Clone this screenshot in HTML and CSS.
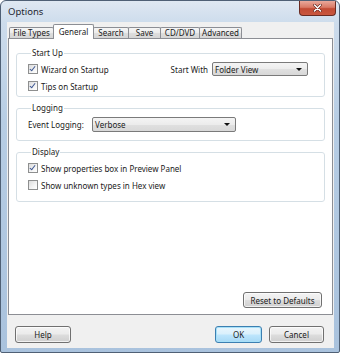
FILE: index.html
```html
<!DOCTYPE html>
<html>
<head>
<meta charset="utf-8">
<link rel="stylesheet" href="styles.css">
</head>
<body>
<div class="window">
  <div class="titlebar">
    <span class="title">Options</span>
    <div class="close">
      <svg width="9" height="8" viewBox="0 0 9 8"><path d="M1.5 1 L7.5 7 M7.5 1 L1.5 7" stroke="#5a1a12" stroke-width="2.6" stroke-linecap="round"/><path d="M1.5 1 L7.5 7 M7.5 1 L1.5 7" stroke="#fff" stroke-width="1.6" stroke-linecap="round"/></svg>
    </div>
  </div>
  <div class="client">
    <div class="tabs">
      <div class="tab w-file">File Types</div>
      <div class="tab active w-general">General</div>
      <div class="tab w-search">Search</div>
      <div class="tab w-save">Save</div>
      <div class="tab w-cd">CD/DVD</div>
      <div class="tab w-adv">Advanced</div>
    </div>
    <div class="panel">
      <fieldset class="group g-start">
        <legend>Start Up</legend>
        <div class="row row-split">
          <label class="check"><span class="box on"></span>Wizard on Startup</label>
          <div class="with">
            <span class="lbl">Start With</span>
            <div class="combo c-folder"><span>Folder View</span><span class="arrow"></span></div>
          </div>
        </div>
        <div class="row">
          <label class="check"><span class="box on"></span>Tips on Startup</label>
        </div>
      </fieldset>
      <fieldset class="group g-log">
        <legend>Logging</legend>
        <div class="row row-log">
          <span class="lbl lbl-log">Event Logging:</span>
          <div class="combo c-verbose"><span>Verbose</span><span class="arrow"></span></div>
        </div>
      </fieldset>
      <fieldset class="group g-disp">
        <legend>Display</legend>
        <div class="row">
          <label class="check"><span class="box on"></span>Show properties box in Preview Panel</label>
        </div>
        <div class="row">
          <label class="check"><span class="box"></span>Show unknown types in Hex view</label>
        </div>
      </fieldset>
      <div class="panel-foot">
        <button class="btn b-reset">Reset to Defaults</button>
      </div>
    </div>
    <div class="footer">
      <button class="btn b-help">Help</button>
      <div class="spacer"></div>
      <button class="btn default b-ok">OK</button>
      <button class="btn b-cancel">Cancel</button>
    </div>
  </div>
</div>
</body>
</html>
```

FILE: styles.css
```css
html, body {
  margin: 0;
  padding: 0;
  background: #ffffff;
}

body {
  font-family: "Noto Sans", "Open Sans", sans-serif;
  font-size: 8px;
  color: #1a1a1a;
}

.window {
  width: 340px;
  height: 353px;
  box-sizing: border-box;
  border: 1px solid #4f6075;
  border-radius: 6px 6px 2px 2px;
  background: linear-gradient(180deg, #dfe8f2 0px, #cddcec 22px, #b7cde4 120px, #a9c2dd 353px);
  display: flex;
  flex-direction: column;
  overflow: hidden;
}

.titlebar {
  height: 21px;
  flex: none;
  display: flex;
  align-items: flex-start;
  padding-left: 7px;
}

.title {
  font-size: 9.5px;
  line-height: 21px;
  color: #1e2630;
}

.close {
  margin-left: auto;
  margin-right: 3px;
  width: 37px;
  height: 15px;
  box-sizing: border-box;
  border: 1px solid #6a2b22;
  border-top: none;
  border-radius: 0 0 4px 4px;
  background: linear-gradient(180deg, #e9a99b 0%, #d97a66 45%, #c24b34 55%, #c9573f 100%);
  display: flex;
  align-items: center;
  justify-content: center;
}

.client {
  flex: 1;
  margin: 0 5px 4px 6px;
  background: #f0f0f0;
  display: flex;
  flex-direction: column;
  padding: 0 1px;
}

.tabs {
  display: flex;
  align-items: flex-end;
  height: 16px;
  padding-left: 1px;
  flex: none;
}

.tab {
  height: 11px;
  box-sizing: border-box;
  border: 1px solid #8c8e94;
  border-bottom: none;
  margin-right: -1px;
  background: linear-gradient(180deg, #f5f5f5 0%, #ebebeb 50%, #dedede 51%, #d6d6d6 100%);
  text-align: center;
  line-height: 10px;
  border-radius: 2px 2px 0 0;
  white-space: nowrap;
  overflow: hidden;
}

.tab.active {
  height: 15px;
  background: #ffffff;
  position: relative;
  z-index: 1;
  margin-bottom: -1px;
  line-height: 13px;
}

.w-file { width: 45px; }
.w-general { width: 41px; }
.w-search { width: 36px; }
.w-save { width: 33px; }
.w-cd { width: 40px; }
.w-adv { width: 43px; }

.panel {
  flex: none;
  height: 277px;
  box-sizing: border-box;
  border: 1px solid #8c8e94;
  background: #ffffff;
  padding: 9px 7px 6px 7px;
  display: flex;
  flex-direction: column;
}

.group {
  margin: 0;
  padding: 0;
  border: 1px solid #d5dfe5;
  border-radius: 3px;
  min-width: 0;
}

.group legend {
  padding: 0 1px;
  margin-left: 3px;
  line-height: 10px;
  height: 10px;
}

.g-start { padding: 4px 16px 3px 11px; }
.g-log { margin-top: 6px; padding: 4px 16px 8px 11px; }
.g-disp { margin-top: 6px; padding: 4px 16px 9px 11px; }

.row {
  display: flex;
  align-items: center;
  height: 14px;
}

.row + .row { margin-top: 3px; }

.row-split { justify-content: space-between; }

.row-log { height: 15px; }

.check {
  display: flex;
  align-items: center;
  white-space: nowrap;
}

.box {
  width: 10px;
  height: 10px;
  box-sizing: border-box;
  border: 1px solid #8e8f8f;
  background: linear-gradient(135deg, #dcdcdc 0%, #f4f4f4 60%, #ffffff 100%);
  margin-right: 3px;
  flex: none;
  position: relative;
}

.box.on::after {
  content: "";
  position: absolute;
  left: 2px;
  top: 0px;
  width: 2px;
  height: 5px;
  border: solid #3b5591;
  border-width: 0 1.6px 1.6px 0;
  transform: rotate(38deg);
  transform-origin: center;
}

.with {
  display: flex;
  align-items: center;
}

.lbl { white-space: nowrap; }

.with .lbl { margin-right: 4px; }

.lbl-log { width: 64px; flex: none; }

.combo {
  height: 14px;
  box-sizing: border-box;
  border: 1px solid #7a7a7a;
  border-radius: 2px;
  background: linear-gradient(180deg, #f4f4f4 0%, #ececec 50%, #e0e0e0 51%, #d8d8d8 100%);
  display: flex;
  align-items: center;
  justify-content: space-between;
  padding: 0 5px 0 2px;
}

.c-folder { width: 96px; }
.c-verbose { width: 144px; height: 15px; }

.arrow {
  width: 0;
  height: 0;
  border-left: 3px solid transparent;
  border-right: 3px solid transparent;
  border-top: 3px solid #111;
}

.panel-foot {
  margin-top: auto;
  display: flex;
  justify-content: flex-end;
  padding-right: 5px;
}

.btn {
  font-family: inherit;
  font-size: 8px;
  color: #1a1a1a;
  height: 17px;
  box-sizing: border-box;
  border: 1px solid #707070;
  border-radius: 3px;
  background: linear-gradient(180deg, #f3f3f3 0%, #ebebeb 48%, #dddddd 52%, #cfcfcf 100%);
  padding: 0;
  margin: 0;
  box-shadow: inset 0 0 0 1px rgba(255,255,255,0.7);
}

.b-reset { width: 79px; height: 16px; margin-right: -2px; }
.b-help { width: 56px; }
.b-ok { width: 47px; }
.b-cancel { width: 55px; margin-left: 7px; }

.btn.default {
  border-color: #3c7fb1;
  background: linear-gradient(180deg, #eaf6fd 0%, #d9f0fc 48%, #bee6fd 52%, #a7d9f5 100%);
  box-shadow: inset 0 0 0 1px #a6e0f8;
}

.footer {
  flex: 1;
  display: flex;
  align-items: flex-start;
  padding: 11px 9px 0 7px;
}

.spacer { flex: 1; }
```
